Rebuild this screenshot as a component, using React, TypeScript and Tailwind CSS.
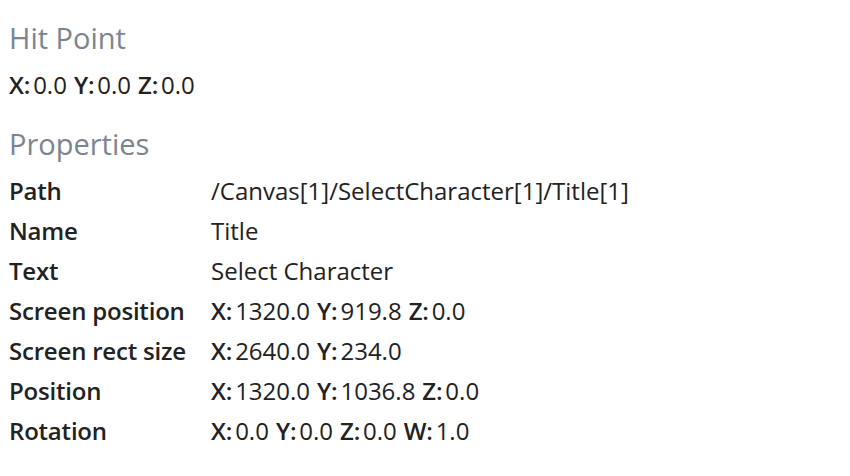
const Vec = ({ parts }: { parts: [string, string][] }) => (
  <div className="flex gap-[7px]">
    {parts.map(([k, v]) => (
      <span key={k} className="flex gap-[3px]">
        <span className="font-semibold tracking-[-0.2px]">{k}:</span>
        <span>{v}</span>
      </span>
    ))}
  </div>
);

const rows: [string, React.ReactNode][] = [
  ["Path", "/Canvas[1]/SelectCharacter[1]/Title[1]"],
  ["Name", "Title"],
  ["Text", "Select Character"],
  ["Screen position", <Vec parts={[["X", "1320.0"], ["Y", "919.8"], ["Z", "0.0"]]} />],
  ["Screen rect size", <Vec parts={[["X", "2640.0"], ["Y", "234.0"]]} />],
  ["Position", <Vec parts={[["X", "1320.0"], ["Y", "1036.8"], ["Z", "0.0"]]} />],
  ["Rotation", <Vec parts={[["X", "0.0"], ["Y", "0.0"], ["Z", "0.0"], ["W", "1.0"]]} />],
];

export default function App() {
  return (
    <div
      className="w-[850px] h-[476px] bg-white text-[#222] px-[9px] pt-[18px]"
      style={{ fontFamily: "'Open Sans', 'Noto Sans', sans-serif" }}
    >
      <h2 className="text-[29px] leading-[40px] text-[#7a8591]">Hit Point</h2>
      <div className="text-[24px] leading-[40px] mt-[7px]">
        <Vec parts={[["X", "0.0"], ["Y", "0.0"], ["Z", "0.0"]]} />
      </div>
      <h2 className="text-[29px] leading-[40px] text-[#7a8591] mt-[19px]">Properties</h2>
      <div className="text-[24px] leading-[40px] mt-[7px]">
        {rows.map(([label, value]) => (
          <div key={label} className="flex">
            <div className="w-[202px] font-semibold tracking-[-0.2px]">{label}</div>
            <div>{value}</div>
          </div>
        ))}
      </div>
    </div>
  );
}
